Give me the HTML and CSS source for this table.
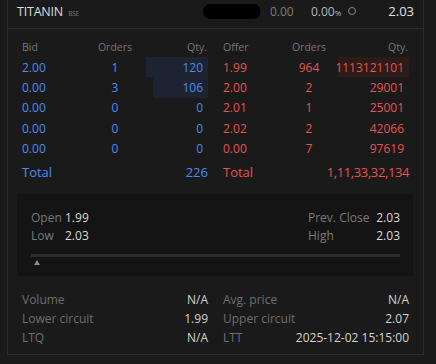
FILE: index.html
```html
<!DOCTYPE html>
<html>
<head>
<meta charset="utf-8">
<link rel="stylesheet" href="styles.css">
</head>
<body>
<div class="panel">
  <div class="head">
    <div class="name">TITANIN <span class="exch">BSE</span></div>
    <div class="quote">
      <span class="redact"></span>
      <span class="chg">0.00</span>
      <span class="pct">0.00<small>%</small></span>
      <span class="ring"></span>
      <span class="ltp">2.03</span>
    </div>
  </div>

  <div class="depth">
    <div class="side bid">
      <div class="row th"><span>Bid</span><span class="c">Orders</span><span class="r">Qty.</span></div>
      <div class="row"><span>2.00</span><span class="c">1</span><span class="r q"><i class="bar" style="width:100%"></i><b>120</b></span></div>
      <div class="row"><span>0.00</span><span class="c">3</span><span class="r q"><i class="bar" style="width:88.3%"></i><b>106</b></span></div>
      <div class="row"><span>0.00</span><span class="c">0</span><span class="r q"><b>0</b></span></div>
      <div class="row"><span>0.00</span><span class="c">0</span><span class="r q"><b>0</b></span></div>
      <div class="row"><span>0.00</span><span class="c">0</span><span class="r q"><b>0</b></span></div>
      <div class="total"><span>Total</span><span>226</span></div>
    </div>
    <div class="side ask">
      <div class="row th"><span>Offer</span><span class="c">Orders</span><span class="r">Qty.</span></div>
      <div class="row"><span>1.99</span><span class="c">964</span><span class="r q"><i class="bar" style="width:100%"></i><b>1113121101</b></span></div>
      <div class="row"><span>2.00</span><span class="c">2</span><span class="r q"><b>29001</b></span></div>
      <div class="row"><span>2.01</span><span class="c">1</span><span class="r q"><b>25001</b></span></div>
      <div class="row"><span>2.02</span><span class="c">2</span><span class="r q"><b>42066</b></span></div>
      <div class="row"><span>0.00</span><span class="c">7</span><span class="r q"><b>97619</b></span></div>
      <div class="total"><span>Total</span><span>1,11,33,32,134</span></div>
    </div>
  </div>

  <div class="ohlc">
    <div class="ohlc-grid">
      <div class="pair"><span class="lbl">Open</span><span class="val">1.99</span></div>
      <div class="pair right"><span class="lbl">Prev. Close</span><span class="val">2.03</span></div>
      <div class="pair"><span class="lbl">Low</span><span class="val">2.03</span></div>
      <div class="pair right"><span class="lbl">High</span><span class="val">2.03</span></div>
    </div>
    <div class="range"><span class="marker"></span></div>
  </div>

  <div class="stats">
    <div class="stat"><span class="lbl">Volume</span><span class="val">N/A</span></div>
    <div class="stat"><span class="lbl">Avg. price</span><span class="val">N/A</span></div>
    <div class="stat"><span class="lbl">Lower circuit</span><span class="val">1.99</span></div>
    <div class="stat"><span class="lbl">Upper circuit</span><span class="val">2.07</span></div>
    <div class="stat"><span class="lbl">LTQ</span><span class="val">N/A</span></div>
    <div class="stat"><span class="lbl">LTT</span><span class="val">2025-12-02 15:15:00</span></div>
  </div>
</div>
</body>
</html>
```
FILE: styles.css
```css
* { box-sizing: border-box; margin: 0; padding: 0; }
html, body { background: #1a1a1a; }
body {
  font-family: "Open Sans", "Noto Sans", sans-serif;
  color: #d6d6d6;
  font-size: 12px;
  width: 436px;
  height: 364px;
  overflow: hidden;
}
.panel {
  margin-left: 7px;
  width: 417px;
  height: 355px;
  border-left: 1px solid #2b2b2b;
  border-right: 1px solid #2b2b2b;
  border-bottom: 1px solid #2b2b2b;
}
.head {
  height: 29px;
  border-bottom: 1px solid #2b2b2b;
  display: flex;
  align-items: center;
  justify-content: space-between;
  padding: 0 9px 6px 9px;
}
.name { font-size: 12.5px; color: #dcdcdc; letter-spacing: -0.2px; }
.exch { font-size: 6.5px; color: #777; margin-left: 2px; }
.quote { display: flex; align-items: center; }
.redact {
  width: 57px; height: 15px; background: #000;
  border-radius: 8px 6px 7px 8px;
  margin-right: 10px;
}
.chg { color: #7d7d7d; font-size: 12px; width: 41px; }
.pct { color: #b8b8b8; font-size: 12px; }
.pct small { font-size: 8px; }
.ring {
  width: 8px; height: 8px; border: 1px solid #8a8a8a; border-radius: 50%;
  margin-left: 7px;
  margin-right: 32px;
}
.ltp { font-size: 13px; color: #e2e2e2; }

.depth {
  display: flex;
  gap: 15px;
  padding: 7px 14px 0 14px;
}
.side { width: 186px; }
.side.bid .row { grid-template-columns: 62px 62px 62px; }
.side.ask .row { grid-template-columns: 57px 58px 71px; }
.row {
  display: grid;
  height: 20.4px;
  align-items: center;
}
.row.th { height: 21px; font-size: 10.5px; }
.row .c { text-align: center; }
.row .r { text-align: right; }
.row.th .r { padding-right: 1px; }
.bid { color: #4a8cf0; }
.ask { color: #e5534f; }
.side .row.th { color: #767676; }
.q { position: relative; height: 100%; display: flex; align-items: center; justify-content: flex-end; padding-right: 5px; }
.q b { font-weight: normal; position: relative; }
.bar { position: absolute; right: 0; top: 0; bottom: 0; }
.bid .bar { background: #1d2331; }
.ask .bar { background: #2d1b18; }
.total {
  height: 26px;
  font-size: 13px;
  display: flex;
  align-items: center;
  justify-content: space-between;
  white-space: nowrap;
}
.ask .total span:last-child { letter-spacing: -0.4px; }

.ohlc {
  margin: 9px 10px 0 9px;
  background: #141414;
  padding: 15px 13px 0 14px;
  height: 82px;
}
.ohlc-grid {
  display: grid;
  grid-template-columns: 1fr 92px;
}
.pair { display: flex; height: 18px; align-items: center; white-space: nowrap; }
.pair .lbl { color: #7a7a7a; width: 34px; }
.pair .val { color: #dadada; }
.pair.right { justify-content: space-between; }
.pair.right .lbl { width: auto; }
.range {
  margin-top: 9px;
  height: 3px;
  background: #2c2c2c;
  position: relative;
}
.marker {
  position: absolute;
  left: 3px;
  top: 6px;
  width: 0; height: 0;
  border-left: 3.5px solid transparent;
  border-right: 3.5px solid transparent;
  border-bottom: 5px solid #8a8a8a;
}

.stats {
  display: grid;
  grid-template-columns: 186px 186px;
  column-gap: 15px;
  padding: 14px 14px 0 14px;
}
.stat { display: flex; justify-content: space-between; height: 19px; align-items: center; }
.stat .lbl { color: #6e6e6e; }
.stat .val { color: #d2d2d2; }
```
